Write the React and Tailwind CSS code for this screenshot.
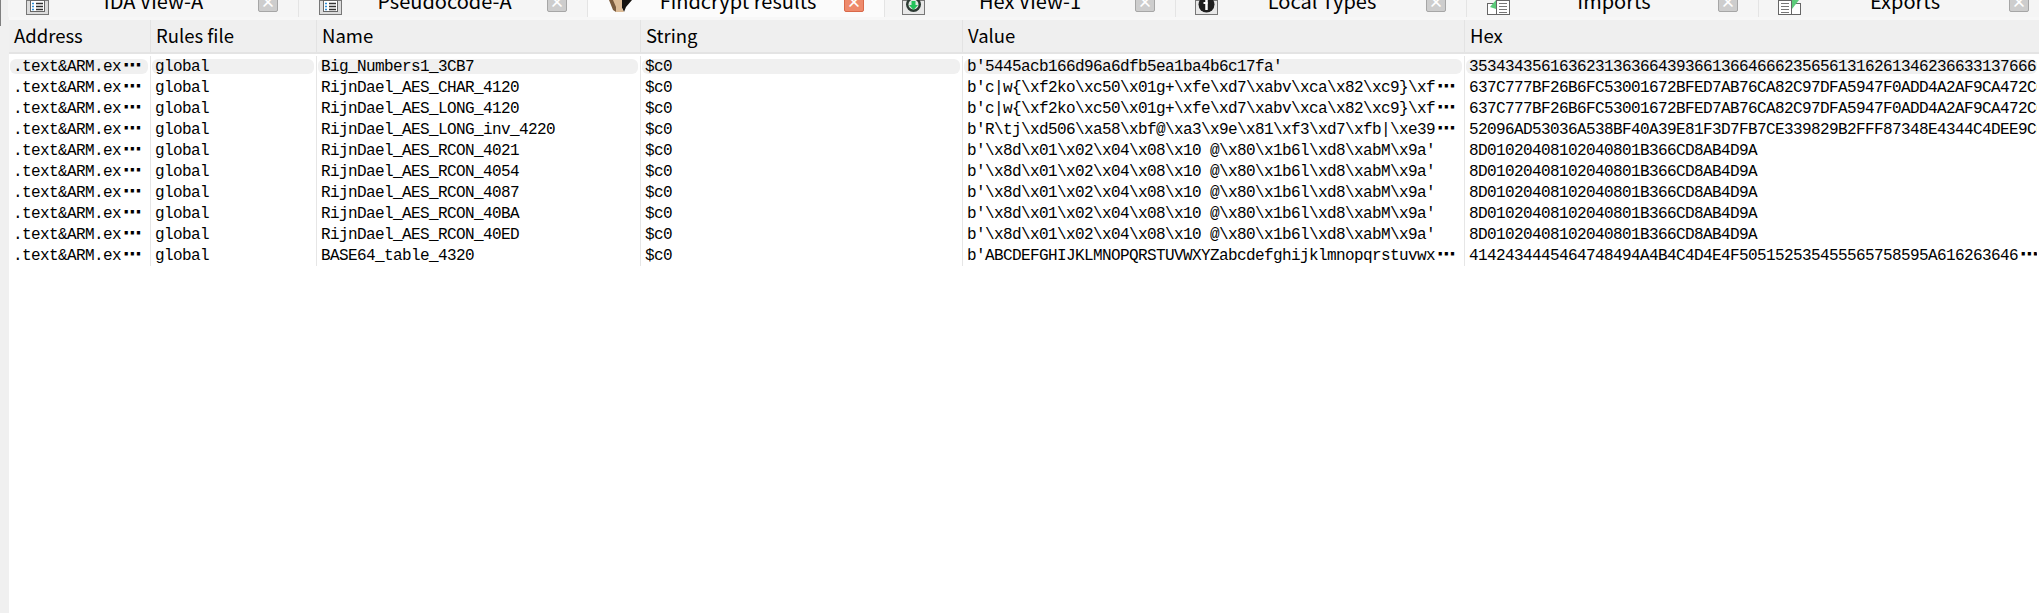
const Sheet = () => (
  <svg width="23" height="16" viewBox="0 0 23 16" className="shrink-0">
    <rect x="0.500" y="0.500" width="22" height="14" fill="#dcdcdc" stroke="#777" />
    <rect x="4.500" y="0.500" width="14" height="11" fill="#fff" stroke="#666" />
    <path d="M6 3.500h2M6 6.500h2M6 9.500h2" stroke="#2f8fd8" strokeWidth="1.500" />
    <path d="M10 3.500h7M10 6.500h7M10 9.500h7" stroke="#333" strokeWidth="1.500" />
  </svg>
);
const Portrait = () => (
  <svg width="23" height="12" viewBox="0 0 23 12" className="shrink-0">
    <path d="M0 0 H8 L10 8 L7 12 L4 10Z" fill="#7a5a3c" />
    <path d="M12 0 H23 L17 7 L15 12 L13 8Z" fill="#15120f" />
    <path d="M4 0 H13 L13 8 L15 12 H7 L7 7Z" fill="#dcbb96" />
  </svg>
);
const HexIcon = () => (
  <svg width="23" height="16" viewBox="0 0 23 16" className="shrink-0">
    <rect x="0.500" y="0.500" width="22" height="14" fill="#e8e8e8" stroke="#777" />
    <circle cx="11.500" cy="4.500" r="7.500" fill="#2d3a33" />
    <circle cx="11.500" cy="4.500" r="5" fill="#dfe8e2" />
    <path d="M9.500 1h4v4h2.500l-4.500 5-4.500-5h2.500Z" fill="#22c25a" />
  </svg>
);
const TypeIcon = () => (
  <svg width="23" height="16" viewBox="0 0 23 16" className="shrink-0">
    <rect x="0.500" y="0.500" width="22" height="14" fill="#e8e8e8" stroke="#777" />
    <circle cx="11.500" cy="4.500" r="8" fill="#1f1f1f" />
    <path d="M11.500 0v10" stroke="#fff" strokeWidth="2.500" />
    <path d="M8.500 3h4" stroke="#fff" strokeWidth="2" />
  </svg>
);
const ImportIcon = () => (
  <svg width="23" height="16" viewBox="0 0 23 16" className="shrink-0">
    <rect x="0.500" y="3.500" width="9" height="11" fill="#fff" stroke="#666" />
    <rect x="9.500" y="0.500" width="13" height="14" fill="#fff" stroke="#666" />
    <path d="M12 3.500h8M12 6.500h8M12 9.500h8M12 12.500h8" stroke="#777" />
    <path d="M3 7 L9 0 L9 9Z" fill="#5ccb7a" />
  </svg>
);
const ExportIcon = () => (
  <svg width="23" height="16" viewBox="0 0 23 16" className="shrink-0">
    <rect x="0.500" y="0.500" width="13" height="14" fill="#fff" stroke="#666" />
    <rect x="13.500" y="3.500" width="9" height="11" fill="#fff" stroke="#666" />
    <path d="M3 3.500h8M3 6.500h8M3 9.500h8M3 12.500h8" stroke="#777" />
    <path d="M14 9 L14 0 L21 0Z" fill="#5ccb7a" />
  </svg>
);

const Close = ({ active }) => (
  <span
    className={`flex h-[21px] w-[20px] shrink-0 items-center justify-center rounded-[2px] border text-[15px] leading-none font-bold text-white ${
      active ? "border-[#d9694a] bg-[#ee8a6c]" : "border-[#a6a6a6] bg-[#cdcdcd]"
    }`}
  >
    ×
  </span>
);

const tabs = [
  { label: "IDA View-A", Icon: Sheet, w: "w-[291px]", pl: "pl-[18px]" },
  { label: "Pseudocode-A", Icon: Sheet, w: "w-[289px]", pl: "pl-[20px]" },
  { label: "Findcrypt results", Icon: Portrait, active: true, w: "w-[297px]", pl: "pl-[21px]" },
  { label: "Hex View-1", Icon: HexIcon, w: "w-[291px]", pl: "pl-[17px]" },
  { label: "Local Types", Icon: TypeIcon, w: "w-[291px]", pl: "pl-[19px]" },
  { label: "Imports", Icon: ImportIcon, w: "w-[292px]", pl: "pl-[20px]" },
  { label: "Exports", Icon: ExportIcon, w: "w-[291px]", pl: "pl-[19px]" },
];

const columns = [
  { label: "Address", w: "w-[142px]" },
  { label: "Rules file", w: "w-[166px]" },
  { label: "Name", w: "w-[324px]" },
  { label: "String", w: "w-[322px]" },
  { label: "Value", w: "w-[502px]" },
  { label: "Hex", w: "flex-1" },
];

const RCON_V = "b'\\x8d\\x01\\x02\\x04\\x08\\x10 @\\x80\\x1b6l\\xd8\\xabM\\x9a'";
const RCON_H = "8D01020408102040801B366CD8AB4D9A";
const SBOX_V = "b'c|w{\\xf2ko\\xc50\\x01g+\\xfe\\xd7\\xabv\\xca\\x82\\xc9}\\xf⋯";
const SBOX_H = "637C777BF26B6FC53001672BFED7AB76CA82C97DFA5947F0ADD4A2AF9CA472C0";

const rows = [
  ["Big_Numbers1_3CB7", "b'5445acb166d96a6dfb5ea1ba4b6c17fa'", "3534343561636231363664393661366466623565613162613462366331376661"],
  ["RijnDael_AES_CHAR_4120", SBOX_V, SBOX_H],
  ["RijnDael_AES_LONG_4120", SBOX_V, SBOX_H],
  ["RijnDael_AES_LONG_inv_4220", "b'R\\tj\\xd506\\xa58\\xbf@\\xa3\\x9e\\x81\\xf3\\xd7\\xfb|\\xe39⋯", "52096AD53036A538BF40A39E81F3D7FB7CE339829B2FFF87348E4344C4DEE9CB"],
  ["RijnDael_AES_RCON_4021", RCON_V, RCON_H],
  ["RijnDael_AES_RCON_4054", RCON_V, RCON_H],
  ["RijnDael_AES_RCON_4087", RCON_V, RCON_H],
  ["RijnDael_AES_RCON_40BA", RCON_V, RCON_H],
  ["RijnDael_AES_RCON_40ED", RCON_V, RCON_H],
  ["BASE64_table_4320", "b'ABCDEFGHIJKLMNOPQRSTUVWXYZabcdefghijklmnopqrstuvwx⋯", "4142434445464748494A4B4C4D4E4F505152535455565758595A616263646⋯"],
];

const Text = ({ children }) => {
  const s = String(children);
  if (!s.endsWith("⋯")) return s;
  return (
    <>
      {s.slice(0, -1)}
      <span className="ml-[2px] font-['DejaVu_Sans',sans-serif] text-[18px] leading-none font-bold tracking-normal">⋯</span>
    </>
  );
};

const Cell = ({ w, selected, children }) => (
  <div className={`${w} min-w-0 shrink-0 border-r border-[#e6e6e6] py-[3px] pr-[2px] pl-[1px] last:border-r-0`}>
    <div
      className={`flex h-[15px] items-center overflow-hidden rounded-[6px] pl-[3px] whitespace-nowrap ${
        selected ? "bg-[#f0f0f0]" : ""
      }`}
    >
      <span>
        <Text>{children}</Text>
      </span>
    </div>
  </div>
);

export default function App() {
  return (
    <div className="flex h-[613px] w-[2039px] overflow-hidden bg-white font-['Liberation_Mono',monospace] text-black">
      <div className="flex w-[9px] shrink-0 flex-col bg-[#f0f0f0]">
        <div className="h-[26px] w-[1px] bg-[#7f7f7f]" />
      </div>
      <div className="min-w-0 flex-1">
        <div className="-ml-[1px] h-[17px] overflow-hidden bg-[#f5f5f5]">
          <div className="-mt-[12px] flex h-[29px] font-['Noto_Sans_CJK_SC','Noto_Sans',sans-serif] text-[20px]">
            {tabs.map(({ label, Icon, active, w, pl }) => (
              <div
                key={label}
                className={`flex ${w} ${pl} shrink-0 items-center border-r border-[#e4e4e4] pr-[20px] ${
                  active ? "bg-[#fbfbfb]" : ""
                }`}
              >
                <div className="mt-[12px] flex h-[16px] items-start self-start">
                  <Icon />
                </div>
                <span className="mb-[4px] flex-1 text-center whitespace-nowrap">{label}</span>
                <div className="mt-[3px] self-start">
                  <Close active={active} />
                </div>
              </div>
            ))}
          </div>
        </div>
        <div className="h-[3px] bg-[#f7f7f7]" />
        <div className="flex h-[34px] border-b-2 border-[#e4e4e4] bg-[#efefef] font-['Noto_Sans_CJK_SC','Noto_Sans',sans-serif] text-[18.500px]">
          {columns.map((c) => (
            <div key={c.label} className={`${c.w} flex shrink-0 items-center border-r border-[#e3e3e3] pl-[5px] last:border-r-0`}>
              {c.label}
            </div>
          ))}
        </div>
        <div className="mt-[2px] overflow-hidden text-[16px] tracking-[-0.6px]">
          {rows.map(([name, value, hex], i) => (
            <div key={name} className="flex h-[21px]">
              <Cell w="w-[142px]" selected={i === 0}>.text&amp;ARM.ex⋯</Cell>
              <Cell w="w-[166px]" selected={i === 0}>global</Cell>
              <Cell w="w-[324px]" selected={i === 0}>{name}</Cell>
              <Cell w="w-[322px]" selected={i === 0}>$c0</Cell>
              <Cell w="w-[502px]" selected={i === 0}>{value}</Cell>
              <Cell w="flex-1" selected={i === 0}>{hex}</Cell>
            </div>
          ))}
        </div>
      </div>
    </div>
  );
}
